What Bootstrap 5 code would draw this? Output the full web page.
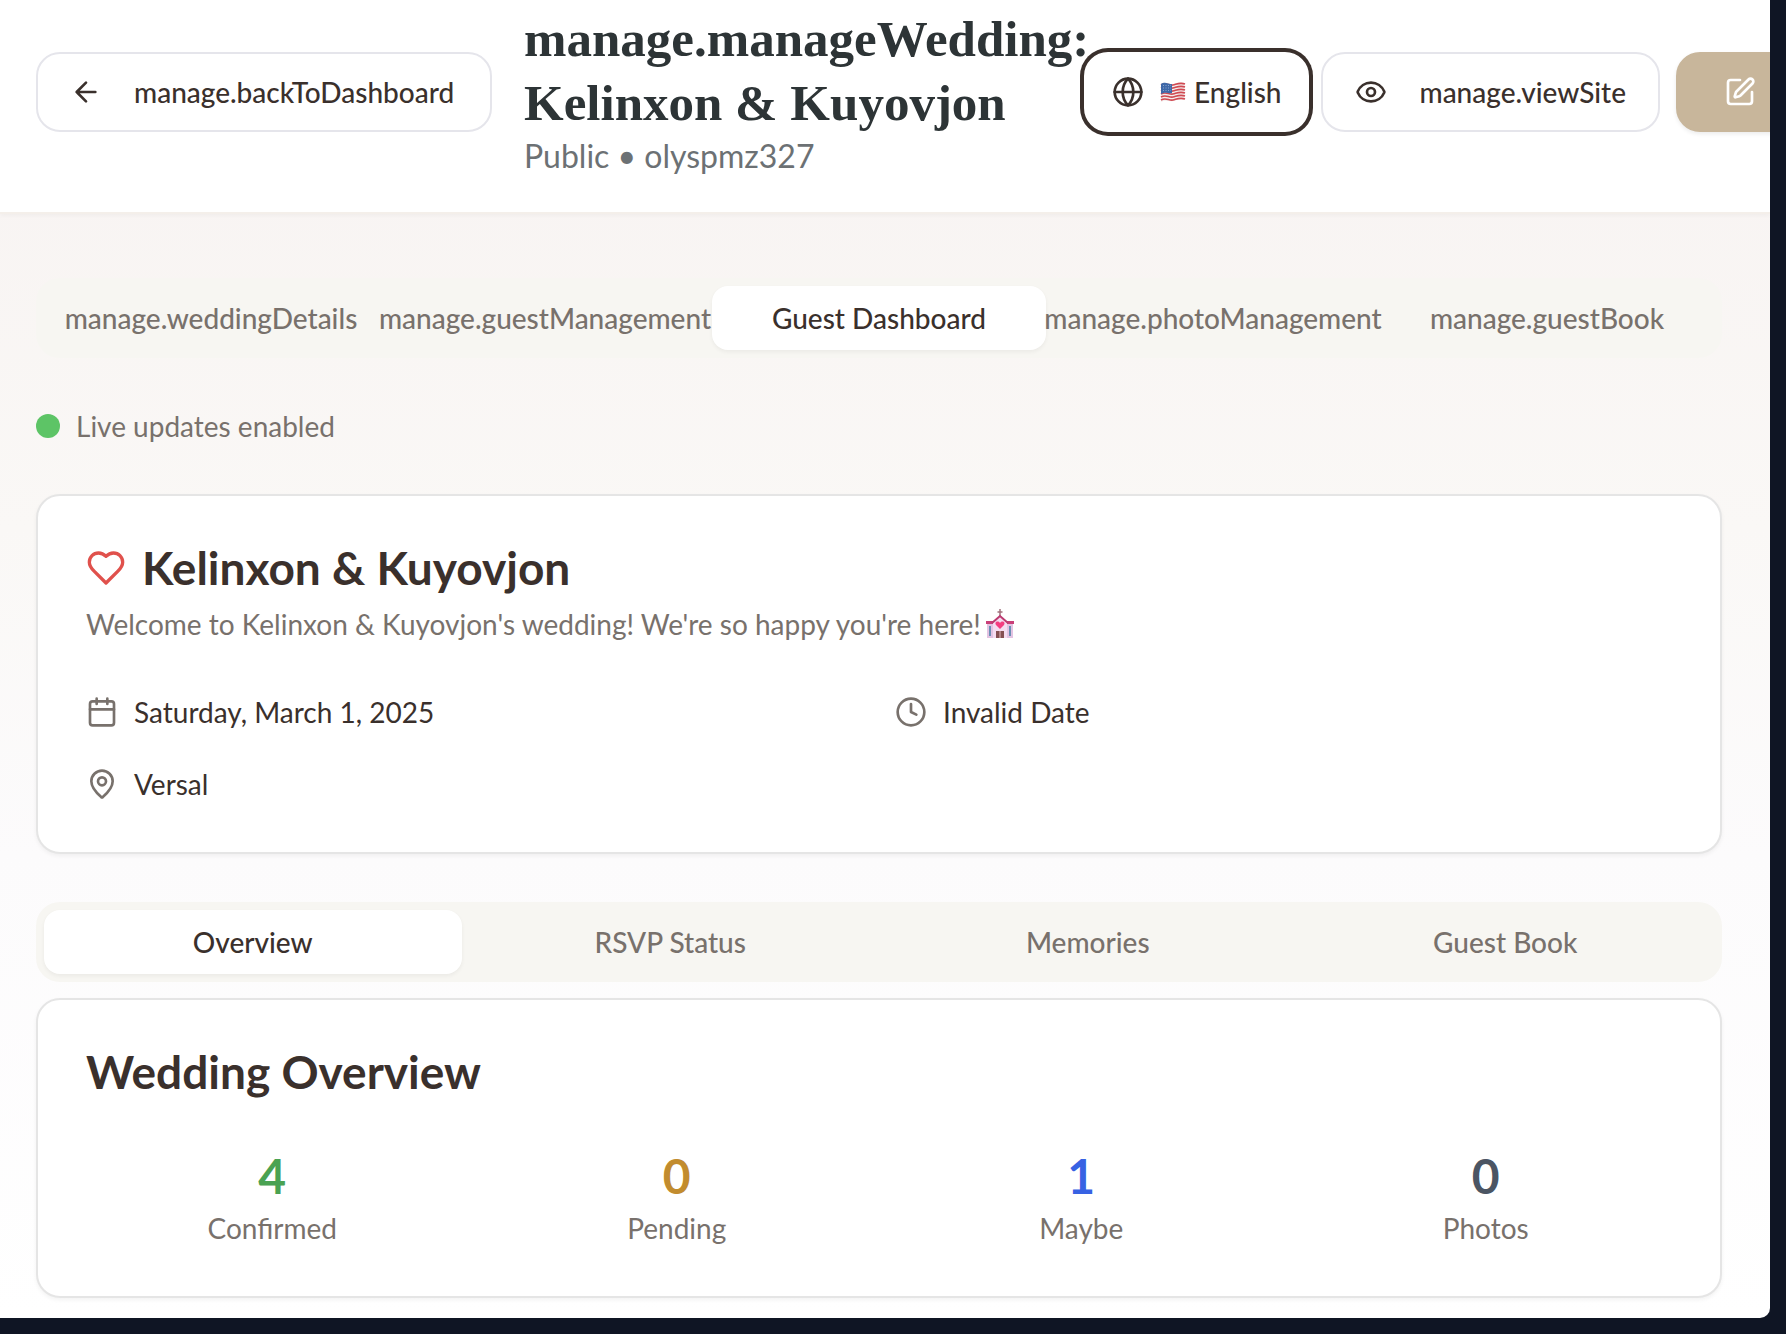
<!DOCTYPE html>
<html lang="en">
<head>
<meta charset="utf-8">
<meta name="viewport" content="width=device-width, initial-scale=1">
<title>Manage wedding</title>
<link href="https://cdn.jsdelivr.net/npm/bootstrap@5.3.0/dist/css/bootstrap.min.css" rel="stylesheet">
<style>
:root { --ink: #3a302c; --muted: #78716c; --line: #e5e5e5; }
body { background: #0f1524; color: var(--ink); font: 400 28px/40px Lato, "Open Sans", sans-serif; }
.frame { margin: 0 16px 16px 0; min-height: calc(100vh - 16px); border-bottom-right-radius: 10px; overflow: hidden; background: linear-gradient(#f7f2f1, #faf8f6 40%, #fcfbfc 65%, #fff); }
.top-bar { gap: 32px; padding: 7px 0 35px 36px; background: #fff; border-bottom: 2px solid #f4efea; box-shadow: 0 2px 4px rgba(0,0,0,.03); }
.pill { display: inline-flex; align-items: center; flex: none; gap: 32px; height: 80px; padding: 0 32px; border: 2px solid #e5e5eb; border-radius: 24px; background: #fff; color: var(--ink); font-weight: 500; white-space: nowrap; }
.pill.back { min-width: 456px; }
.pill.focused { gap: 16px; padding: 0 26px; border-color: #fff; box-shadow: 0 0 0 4px var(--ink); margin-right: 12px; }
.pill.gold { width: 148px; margin-left: 16px; margin-right: -54px; padding-left: 46px; background: #c8b69b; border-color: #c8b69b; color: #fff; box-shadow: 0 2px 4px rgba(0,0,0,.08); }
.heading-block { width: 0; min-width: 0; }
.title { font: 700 51px/64px "Liberation Serif", serif; color: #2d3436; }
.subtitle { font-size: 32px; line-height: 42px; color: #6c7174; }
.ico { width: 32px; height: 32px; flex: none; fill: none; stroke: currentColor; stroke-width: 2; stroke-linecap: round; stroke-linejoin: round; }
.ico-lg { width: 40px; height: 40px; color: #e0514c; }
.flag { width: 26px; height: 22px; }
.chapel { width: 30px; height: 30px; margin-left: 4px; vertical-align: -4px; }
.content { padding: 64px 48px 20px 36px; }
.tab-strip { padding: 8px; border-radius: 24px; background: #f7f6f2; }
.tab-strip button { flex: 1 1 0; min-width: 0; height: 64px; padding: 0; border: 0; border-radius: 16px; background: none; color: var(--muted); font-weight: 500; white-space: nowrap; display: flex; align-items: center; justify-content: center; }
.tab-strip button.active { background: #fff; color: var(--ink); box-shadow: 0 2px 4px rgba(0,0,0,.05); }
.live { gap: 16px; margin: 48px 0; color: var(--muted); }
.live-dot { width: 24px; height: 24px; border-radius: 50%; background: #5dc466; }
.panel { padding: 48px; border: 2px solid var(--line); border-radius: 24px; background: #fff; box-shadow: 0 2px 4px rgba(0,0,0,.05); }
.panel h2 { font-size: 46px; line-height: 48px; font-weight: 700; margin: 0; }
.welcome { margin: 12px 0 48px; }
.soft { color: var(--muted); }
.facts { --bs-gutter-x: 32px; --bs-gutter-y: 32px; }
.tallies { --bs-gutter-x: 32px; }
.figure-no { font-size: 48px; line-height: 64px; font-weight: 700; }
.go { color: #4aa252; } .wait { color: #c28c2e; } .perhaps { color: #3762e3; } .pics { color: #4b5563; }
</style>
<script src="https://cdn.jsdelivr.net/npm/bootstrap@5.3.0/dist/js/bootstrap.bundle.min.js"></script>
</head>
<body>
<div class="frame">
  <header class="top-bar d-flex align-items-center">
    <button type="button" class="pill back"><svg class="ico" viewBox="0 0 24 24"><path d="m12 19-7-7 7-7M19 12H5"/></svg>manage.backToDashboard</button>
    <div class="d-flex align-items-center flex-grow-1">
      <div class="heading-block flex-grow-1">
        <h1 class="title m-0">manage.manageWedding: Kelinxon &amp; Kuyovjon</h1>
        <p class="subtitle m-0">Public • olyspmz327</p>
      </div>
      <button type="button" class="pill focused">
        <svg class="ico" viewBox="0 0 24 24"><circle cx="12" cy="12" r="10"/><path d="M12 2a14.500 14.500 0 0 0 0 20 14.500 14.500 0 0 0 0-20M2 12h20"/></svg>
        <span class="d-flex align-items-center gap-2"><svg class="flag" viewBox="0 0 26 22" role="img" aria-label="United States"><path d="M1 3c5-3 8 1 12 0s7-3 12-1v17c-5-2-8 0-12 1s-7-2-12 1z" fill="#f4eeee"/><path d="M1 4c5-3 8 1 12 0s7-3 12-1M1 7c5-3 8 1 12 0s7-3 12-1M1 10c5-3 8 1 12 0s7-3 12-1M1 13c5-3 8 1 12 0s7-3 12-1M1 16c5-3 8 1 12 0s7-3 12-1M1 19c5-3 8 1 12 0s7-3 12-1" fill="none" stroke="#d04a52" stroke-width="1.700"/><path d="M1 3c5-3 8 1 11 0v9c-4 1-6-2-11 1z" fill="#3f68a8"/><path d="M3 4.500h8M3 7h8M3 9.500h8" stroke="#9db4d6" stroke-width=".8" stroke-dasharray="1 1.500"/></svg>English</span>
      </button>
      <button type="button" class="pill"><svg class="ico" viewBox="0 0 24 24"><path d="M2.060 12.350a1 1 0 0 1 0-.7 10.750 10.750 0 0 1 19.880 0 1 1 0 0 1 0 .7 10.750 10.750 0 0 1-19.880 0"/><circle cx="12" cy="12" r="3"/></svg>manage.viewSite</button>
      <button type="button" class="pill gold" aria-label="Edit"><svg class="ico" viewBox="0 0 24 24"><path d="M12 3H5a2 2 0 0 0-2 2v14a2 2 0 0 0 2 2h14a2 2 0 0 0 2-2v-7"/><path d="M18.375 2.625a1 1 0 0 1 3 3l-9.013 9.014a2 2 0 0 1-.853.505l-2.873.84a.5.5 0 0 1-.62-.62l.84-2.873a2 2 0 0 1 .506-.852z"/></svg></button>
    </div>
  </header>
  <main class="content">
    <nav class="tab-strip d-flex" aria-label="Manage">
      <button type="button">manage.weddingDetails</button>
      <button type="button">manage.guestManagement</button>
      <button type="button" class="active">Guest Dashboard</button>
      <button type="button">manage.photoManagement</button>
      <button type="button">manage.guestBook</button>
    </nav>
    <div class="live d-flex align-items-center"><span class="live-dot"></span>Live updates enabled</div>
    <section class="panel mb-5">
      <div class="d-flex align-items-center gap-3"><svg class="ico ico-lg" viewBox="0 0 24 24"><path d="M19 14c1.490-1.460 3-3.210 3-5.500A5.500 5.500 0 0 0 16.500 3c-1.760 0-3 .5-4.500 2-1.500-1.500-2.740-2-4.500-2A5.500 5.500 0 0 0 2 8.500c0 2.300 1.500 4.050 3 5.500l7 7Z"/></svg><h2>Kelinxon &amp; Kuyovjon</h2></div>
      <p class="soft welcome">Welcome to Kelinxon &amp; Kuyovjon's wedding! We're so happy you're here!<svg class="chapel" viewBox="0 0 30 30" role="img" aria-label="Wedding chapel"><path d="M15 0v8M12.500 3h5" stroke="#a0717c" stroke-width="1.500"/><path d="M2 14h26v15H2z" fill="#e3c3e2"/><path d="M8 13l7-6 7 6v16H8z" fill="#f5dcf0"/><path d="M1 12h7v3H1zM22 12h7v3h-7z" fill="#c93f78"/><path d="M7 14l8-7 8 7" fill="none" stroke="#bd3a70" stroke-width="2"/><path d="M15 20l-4-4c-2-3 2-5 4-2 2-3 6-1 4 2z" fill="#f43d80"/><path d="M11 22h8v7h-8z" fill="#855052"/><path d="M15 22v7" stroke="#e0b9bd"/><path d="M4 17h2v10H4zM24 17h2v10h-2z" fill="#6c8fb5"/></svg></p>
      <div class="row facts">
        <div class="col-6 d-flex align-items-center gap-3"><svg class="ico soft" viewBox="0 0 24 24"><path d="M8 2v4M16 2v4M3 10h18"/><rect x="3" y="4" width="18" height="18" rx="2"/></svg>Saturday, March 1, 2025</div>
        <div class="col-6 d-flex align-items-center gap-3"><svg class="ico soft" viewBox="0 0 24 24"><circle cx="12" cy="12" r="10"/><path d="M12 6v6l4 2"/></svg>Invalid Date</div>
        <div class="col-6 d-flex align-items-center gap-3"><svg class="ico soft" viewBox="0 0 24 24"><path d="M20 10c0 4.990-5.540 10.190-7.400 11.800a1 1 0 0 1-1.200 0C9.540 20.190 4 14.990 4 10a8 8 0 0 1 16 0"/><circle cx="12" cy="10" r="3"/></svg>Versal</div>
      </div>
    </section>
    <nav class="tab-strip d-flex mb-3" aria-label="Guest dashboard">
      <button type="button" class="active">Overview</button>
      <button type="button">RSVP Status</button>
      <button type="button">Memories</button>
      <button type="button">Guest Book</button>
    </nav>
    <section class="panel">
      <h2 class="mb-5">Wedding Overview</h2>
      <div class="row tallies text-center">
        <div class="col-3"><div class="figure-no go">4</div><div class="soft">Confirmed</div></div>
        <div class="col-3"><div class="figure-no wait">0</div><div class="soft">Pending</div></div>
        <div class="col-3"><div class="figure-no perhaps">1</div><div class="soft">Maybe</div></div>
        <div class="col-3"><div class="figure-no pics">0</div><div class="soft">Photos</div></div>
      </div>
    </section>
  </main>
</div>
</body>
</html>
